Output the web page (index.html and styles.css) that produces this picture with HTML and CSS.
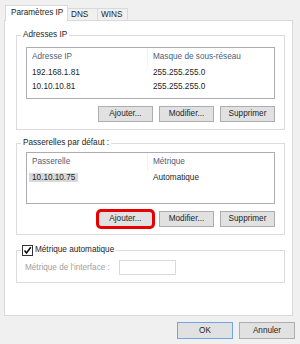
FILE: index.html
```html
<!DOCTYPE html>
<html lang="fr">
<head>
    <meta charset="UTF-8">
    <meta name="viewport" content="width=device-width, initial-scale=1.0">
    <title>Paramètres TCP/IP avancés</title>
    <link rel="stylesheet" href="styles.css">
</head>
<body>
    <div class="dialog">
        <div class="tabs">
            <div class="tab active">Paramètres IP</div>
            <div class="tab">DNS</div>
            <div class="tab">WINS</div>
        </div>

        <div class="panel">
            <fieldset class="group group-ip">
                <legend>Adresses IP</legend>
                <div class="list">
                    <div class="row head"><span class="c1">Adresse IP</span><span class="c2">Masque de sous-réseau</span></div>
                    <div class="row"><span class="c1">192.168.1.81</span><span class="c2">255.255.255.0</span></div>
                    <div class="row"><span class="c1">10.10.10.81</span><span class="c2">255.255.255.0</span></div>
                </div>
                <div class="buttons">
                    <button class="btn">Ajouter...</button>
                    <button class="btn">Modifier...</button>
                    <button class="btn">Supprimer</button>
                </div>
            </fieldset>

            <fieldset class="group group-gw">
                <legend>Passerelles par défaut :</legend>
                <div class="list">
                    <div class="row head"><span class="c1">Passerelle</span><span class="c2">Métrique</span></div>
                    <div class="row"><span class="c1"><span class="selected">10.10.10.75</span></span><span class="c2">Automatique</span></div>
                </div>
                <div class="buttons">
                    <button class="btn marked">Ajouter...</button>
                    <button class="btn">Modifier...</button>
                    <button class="btn">Supprimer</button>
                </div>
            </fieldset>

            <fieldset class="group group-metric">
                <legend>
                    <span class="checkbox">
                        <svg width="9" height="9" viewBox="0 0 9 9"><path d="M1.5 4.5 L3.5 7 L7.8 1.2" fill="none" stroke="#111" stroke-width="1.6"/></svg>
                    </span>Métrique automatique
                </legend>
                <div class="field">
                    <span class="field-label">Métrique de l'interface :</span>
                    <span class="field-input"></span>
                </div>
            </fieldset>
        </div>

        <div class="footer">
            <button class="btn btn-large default">OK</button>
            <button class="btn btn-large">Annuler</button>
        </div>
    </div>
</body>
</html>
```

FILE: styles.css
```css
body {
    margin: 0;
    background-color: #f0f0f0;
    font-family: "Liberation Sans", Arial, sans-serif;
    font-size: 8.2px;
    color: #1e1e1e;
}

.dialog {
    padding: 5px 0 0 4px;
}

/* tabs */
.tabs {
    display: flex;
    align-items: flex-end;
    height: 15px;
    padding-left: 1px;
}

.tab {
    box-sizing: border-box;
    height: 12px;
    width: 30px;
    padding-left: 3px;
    line-height: 11px;
    border: 1px solid #d9d9d9;
    border-bottom: none;
    border-left: none;
    background-color: #f0f0f0;
}

.tab.active {
    position: relative;
    z-index: 1;
    width: 63px;
    height: 16px;
    margin-bottom: -1px;
    padding-left: 5px;
    line-height: 14px;
    border-left: 1px solid #d9d9d9;
    background-color: white;
}

.panel {
    box-sizing: border-box;
    width: 289px;
    height: 296px;
    padding: 8px 0 0 11px;
    border: 1px solid #d9d9d9;
    background-color: white;
}

/* group boxes */
.group {
    box-sizing: border-box;
    width: 269px;
    min-width: 0;
    margin: 0;
    padding: 6px 9px 7px;
    border: 1px solid #dcdcdc;
}

.group legend {
    margin-left: -5px;
    padding: 0 2px;
    line-height: 12px;
}

.group-gw {
    margin-top: 7px;
    padding-top: 3px;
}

.group-metric {
    margin-top: 9px;
    padding-top: 4px;
}

.group-metric legend {
    display: flex;
    align-items: center;
    padding-left: 1px;
}

.checkbox {
    box-sizing: border-box;
    display: flex;
    align-items: center;
    justify-content: center;
    width: 11px;
    height: 11px;
    margin-right: 2px;
    border: 1px solid #333;
    background-color: white;
}

/* list views */
.list {
    box-sizing: border-box;
    height: 52px;
    border: 1px solid #abadb3;
    background-color: white;
}

.row {
    display: flex;
    height: 14px;
    line-height: 14px;
}

.row.head {
    height: 18px;
    line-height: 18px;
    color: #4c607a;
}

.c1 {
    box-sizing: border-box;
    width: 121px;
    padding-left: 5px;
}

.head .c1 {
    border-right: 1px solid #eef0f4;
}

.c2 {
    padding-left: 5px;
}

.selected {
    margin-left: -3px;
    padding: 0 3px;
    background-color: #d9d9d9;
}

/* buttons */
.buttons {
    display: flex;
    justify-content: flex-end;
    gap: 6px;
    margin-top: 7px;
}

.btn {
    box-sizing: border-box;
    width: 55px;
    height: 16px;
    padding: 0;
    border: 1px solid #adadad;
    border-radius: 0;
    background-color: #e1e1e1;
    font-family: inherit;
    font-size: inherit;
    color: #1e1e1e;
    line-height: 14px;
}

.btn.marked {
    outline: 3px solid #e60000;
    outline-offset: -1px;
    border-radius: 3px;
}

.btn-large {
    width: 56px;
    height: 17px;
}

.btn.default {
    border-color: #6aa6e8;
}

/* interface metric */
.field {
    display: flex;
    align-items: center;
}

.field-label {
    width: 94px;
    margin-left: -1px;
    color: #a0a0a0;
}

.field-input {
    box-sizing: border-box;
    width: 57px;
    height: 15px;
    border: 1px solid #d9d9d9;
    background-color: white;
}

.footer {
    display: flex;
    justify-content: flex-end;
    gap: 6px;
    margin-top: 6px;
    padding-right: 5px;
}
```
